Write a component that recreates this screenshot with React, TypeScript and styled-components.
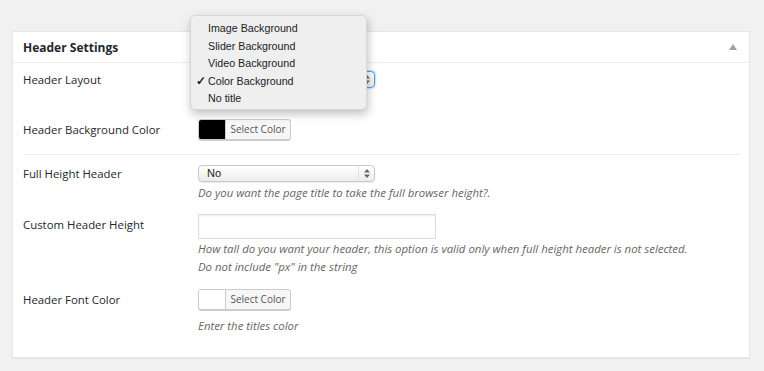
import React from "react";
import styled, { createGlobalStyle } from "styled-components";

const Global = createGlobalStyle`
  html, body { margin: 0; padding: 0; background: #f1f1f1; }
  body { font-family: "Open Sans", "DejaVu Sans", sans-serif; color: #444; }
  * { box-sizing: border-box; }
`;

const Page = styled.div`
  position: relative;
  width: 764px;
  height: 371px;
  padding: 31px 14px 0 12px;
`;

const Card = styled.section`
  background: #fff;
  border: 1px solid #e5e5e5;
  box-shadow: 0 1px 1px rgba(0, 0, 0, 0.04);
  width: 738px;
`;

const CardHeader = styled.header`
  height: 31px;
  display: flex;
  align-items: center;
  justify-content: space-between;
  padding: 0 12px 0 10px;
  border-bottom: 1px solid #eee;
`;

const Title = styled.h2`
  margin: 0;
  font-size: 12px;
  font-weight: 700;
  color: #23282d;
`;

const Toggle = styled.svg`
  width: 8px;
  height: 6px;
  display: block;
`;

const Body = styled.div`
  display: flex;
  flex-direction: column;
  padding: 0 9px 22px 10px;
`;

const Row = styled.div<{ $mt: number }>`
  display: grid;
  grid-template-columns: 175px 1fr;
  margin-top: ${(p) => p.$mt}px;
`;

const Label = styled.div<{ $lh: number }>`
  font-size: 11.4px;
  line-height: ${(p) => p.$lh}px;
  color: #23282d;
`;

const Field = styled.div`
  display: flex;
  flex-direction: column;
  align-items: flex-start;
`;

const Desc = styled.p<{ $mt: number }>`
  margin: ${(p) => p.$mt}px 0 0;
  font-size: 11.4px;
  line-height: 18px;
  font-style: italic;
  color: #666;
`;

const Divider = styled.hr`
  border: 0;
  border-top: 1px solid #eee;
  margin: 14px 0 0;
  height: 0;
`;

const SelectBox = styled.div<{ $focus?: boolean }>`
  width: 177px;
  height: 17px;
  display: flex;
  align-items: stretch;
  border: 1px solid ${(p) => (p.$focus ? "#5b9dd9" : "#c9c9c9")};
  border-radius: 4px;
  background: linear-gradient(#ffffff, #ececec);
  box-shadow: ${(p) => (p.$focus ? "0 0 2px rgba(30,140,190,.8)" : "0 1px 1px rgba(0,0,0,.08)")};
  font-family: "Liberation Sans", Arial, sans-serif;
  font-size: 11px;
  color: #222;
`;

const SelectText = styled.span`
  flex: 1;
  padding-left: 8px;
  line-height: 15px;
`;

const SelectArrows = styled.span`
  width: 16px;
  display: flex;
  align-items: center;
  justify-content: center;
  border-left: 1px solid #e2e2e2;
`;

const TextInput = styled.input`
  width: 238px;
  height: 25px;
  border: 1px solid #ddd;
  box-shadow: inset 0 1px 2px rgba(0, 0, 0, 0.07);
  background: #fff;
  margin: 0;
  padding: 0 6px;
`;

const ColorPicker = styled.div`
  display: flex;
  width: 93px;
  height: 21px;
  border: 1px solid #ccc;
  border-radius: 3px;
  overflow: hidden;
  background: #f7f7f7;
  box-shadow: 0 1px 0 #ccc;
`;

const Swatch = styled.span<{ $color: string }>`
  width: 27px;
  background: ${(p) => p.$color};
  border-right: 1px solid #ccc;
`;

const PickButton = styled.span`
  flex: 1;
  text-align: center;
  font-size: 10px;
  line-height: 19px;
  color: #555;
`;

const Menu = styled.ul`
  position: absolute;
  left: 190px;
  top: 15px;
  width: 177px;
  height: 95px;
  margin: 0;
  padding: 4px 0 0;
  list-style: none;
  background: #efefef;
  border: 1px solid #d6d6d6;
  border-radius: 5px;
  box-shadow: 1px 4px 10px rgba(0, 0, 0, 0.25);
  font-family: "Liberation Sans", Arial, sans-serif;
  font-size: 10.7px;
  color: #222;
`;

const MenuItem = styled.li`
  position: relative;
  height: 17.6px;
  line-height: 17.6px;
  padding-left: 17px;
`;

const Check = styled.span`
  position: absolute;
  left: 5px;
  top: 0;
  font-size: 12px;
  font-weight: 700;
`;

const Arrows = () => (
  <svg width="6" height="9" viewBox="0 0 6 9">
    <polygon points="3,0 6,3.5 0,3.5" fill="#666" />
    <polygon points="0,5.5 6,5.5 3,9" fill="#666" />
  </svg>
);

const options = ["Image Background", "Slider Background", "Video Background", "Color Background", "No title"];

export default function App() {
  return (
    <Page>
      <Global />
      <Card>
        <CardHeader>
          <Title>Header Settings</Title>
          <Toggle viewBox="0 0 8 6">
            <polygon points="4,0 8,6 0,6" fill="#a0a0a0" />
          </Toggle>
        </CardHeader>
        <Body>
          <Row $mt={8}>
            <Label $lh={17}>Header Layout</Label>
            <Field>
              <SelectBox $focus>
                <SelectText>Color Background</SelectText>
                <SelectArrows>
                  <Arrows />
                </SelectArrows>
              </SelectBox>
              <Desc $mt={2}>Choose the header's background.</Desc>
            </Field>
          </Row>
          <Row $mt={11}>
            <Label $lh={21}>Header Background Color</Label>
            <Field>
              <ColorPicker>
                <Swatch $color="#000" />
                <PickButton>Select Color</PickButton>
              </ColorPicker>
            </Field>
          </Row>
          <Divider />
          <Row $mt={10}>
            <Label $lh={17}>Full Height Header</Label>
            <Field>
              <SelectBox>
                <SelectText>No</SelectText>
                <SelectArrows>
                  <Arrows />
                </SelectArrows>
              </SelectBox>
              <Desc $mt={2}>Do you want the page title to take the full browser height?.</Desc>
            </Field>
          </Row>
          <Row $mt={12}>
            <Label $lh={21}>Custom Header Height</Label>
            <Field>
              <TextInput type="text" />
              <Desc $mt={1}>
                How tall do you want your header, this option is valid only when full height header is not selected.
                <br />
                Do not include "px" in the string
              </Desc>
            </Field>
          </Row>
          <Row $mt={13}>
            <Label $lh={21}>Header Font Color</Label>
            <Field>
              <ColorPicker>
                <Swatch $color="#fff" />
                <PickButton>Select Color</PickButton>
              </ColorPicker>
              <Desc $mt={7}>Enter the titles color</Desc>
            </Field>
          </Row>
        </Body>
      </Card>
      <Menu>
        {options.map((o) => (
          <MenuItem key={o}>
            {o === "Color Background" && <Check>✓</Check>}
            {o}
          </MenuItem>
        ))}
      </Menu>
    </Page>
  );
}
